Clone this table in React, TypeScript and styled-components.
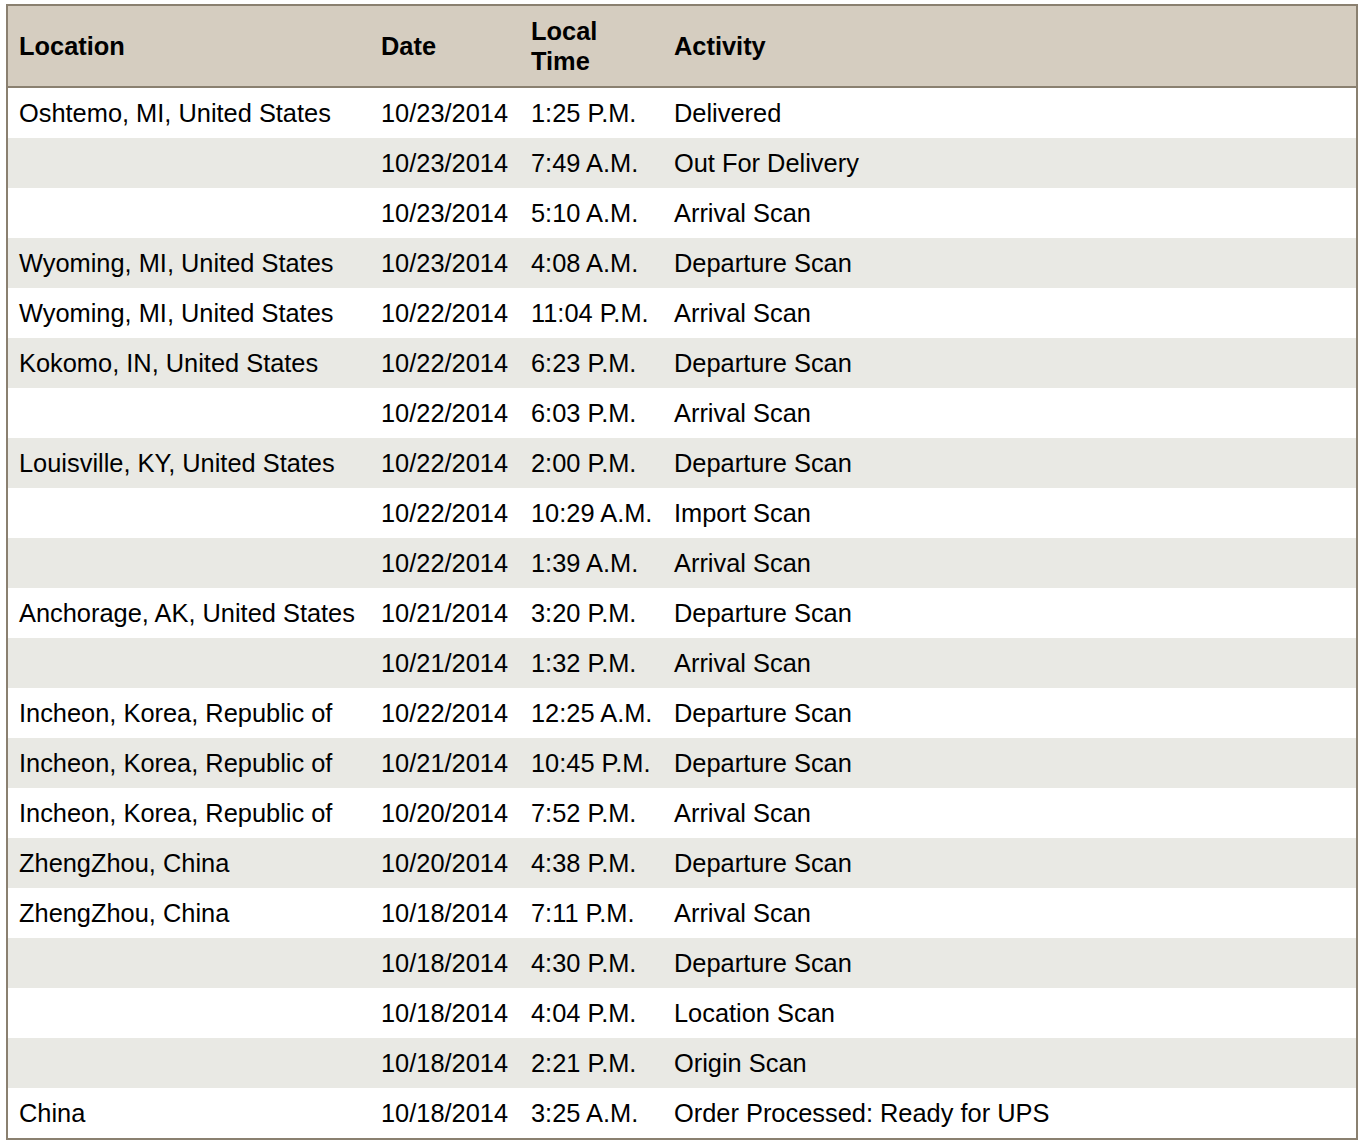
import React from "react";
import styled, { createGlobalStyle } from "styled-components";

const GlobalStyle = createGlobalStyle`
  html, body { margin: 0; padding: 0; background: #ffffff; }
  body { font-family: "Liberation Sans", Arial, Helvetica, sans-serif; }
`;

const Page = styled.div`
  padding: 4px 6px;
`;

const Table = styled.table`
  width: 1352px;
  table-layout: fixed;
  border-collapse: separate;
  border-spacing: 0;
  border: 2px solid #8a8070;
  font-family: "Liberation Sans", Arial, Helvetica, sans-serif;
  font-size: 25.4px;
  color: #000000;
`;

const HeadCell = styled.th`
  background: #d5cdc0;
  height: 80px;
  padding: 0 0 0 11px;
  text-align: left;
  vertical-align: middle;
  font-weight: bold;
  line-height: 30px;
  color: #000000;
  border-bottom: 2px solid #8a8070;
`;

const Row = styled.tr<{ $alt: boolean }>`
  background: ${(p) => (p.$alt ? "#e9e9e4" : "#ffffff")};
`;

const Cell = styled.td`
  height: 50px;
  padding: 0 0 0 11px;
  vertical-align: middle;
  white-space: nowrap;
  line-height: 30px;
`;

type Entry = [string, string, string, string];

const data: Entry[] = [
  ["Oshtemo, MI, United States", "10/23/2014", "1:25 P.M.", "Delivered"],
  ["", "10/23/2014", "7:49 A.M.", "Out For Delivery"],
  ["", "10/23/2014", "5:10 A.M.", "Arrival Scan"],
  ["Wyoming, MI, United States", "10/23/2014", "4:08 A.M.", "Departure Scan"],
  ["Wyoming, MI, United States", "10/22/2014", "11:04 P.M.", "Arrival Scan"],
  ["Kokomo, IN, United States", "10/22/2014", "6:23 P.M.", "Departure Scan"],
  ["", "10/22/2014", "6:03 P.M.", "Arrival Scan"],
  ["Louisville, KY, United States", "10/22/2014", "2:00 P.M.", "Departure Scan"],
  ["", "10/22/2014", "10:29 A.M.", "Import Scan"],
  ["", "10/22/2014", "1:39 A.M.", "Arrival Scan"],
  ["Anchorage, AK, United States", "10/21/2014", "3:20 P.M.", "Departure Scan"],
  ["", "10/21/2014", "1:32 P.M.", "Arrival Scan"],
  ["Incheon, Korea, Republic of", "10/22/2014", "12:25 A.M.", "Departure Scan"],
  ["Incheon, Korea, Republic of", "10/21/2014", "10:45 P.M.", "Departure Scan"],
  ["Incheon, Korea, Republic of", "10/20/2014", "7:52 P.M.", "Arrival Scan"],
  ["ZhengZhou, China", "10/20/2014", "4:38 P.M.", "Departure Scan"],
  ["ZhengZhou, China", "10/18/2014", "7:11 P.M.", "Arrival Scan"],
  ["", "10/18/2014", "4:30 P.M.", "Departure Scan"],
  ["", "10/18/2014", "4:04 P.M.", "Location Scan"],
  ["", "10/18/2014", "2:21 P.M.", "Origin Scan"],
  ["China", "10/18/2014", "3:25 A.M.", "Order Processed: Ready for UPS"],
];

export default function App() {
  return (
    <>
      <GlobalStyle />
      <Page>
        <Table>
          <colgroup>
            <col style={{ width: 362 }} />
            <col style={{ width: 150 }} />
            <col style={{ width: 143 }} />
            <col />
          </colgroup>
          <thead>
            <tr>
              <HeadCell>Location</HeadCell>
              <HeadCell>Date</HeadCell>
              <HeadCell>
                Local
                <br />
                Time
              </HeadCell>
              <HeadCell>Activity</HeadCell>
            </tr>
          </thead>
          <tbody>
            {data.map((r, i) => (
              <Row key={i} $alt={i % 2 === 1}>
                <Cell>{r[0]}</Cell>
                <Cell>{r[1]}</Cell>
                <Cell>{r[2]}</Cell>
                <Cell>{r[3]}</Cell>
              </Row>
            ))}
          </tbody>
        </Table>
      </Page>
    </>
  );
}
